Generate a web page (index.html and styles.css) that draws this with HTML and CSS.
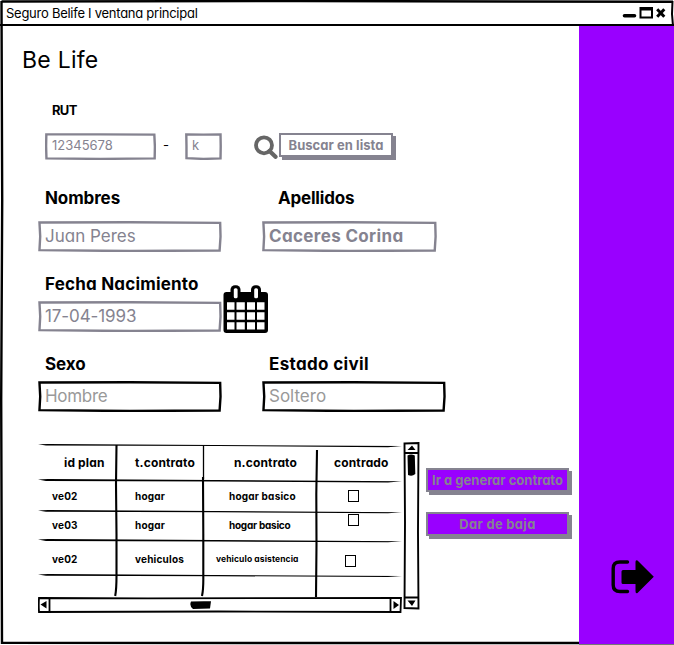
FILE: index.html
```
<!DOCTYPE html>
<html lang="es">
<head>
<meta charset="utf-8">
<title>Seguro Belife</title>
<link rel="stylesheet" href="styles.css">
</head>
<body>
<div class="window">
  <header class="titlebar">
    <span class="title">Seguro Belife I ventana principal</span>
    <svg class="controls" width="44" height="14" viewBox="0 0 44 14">
      <path d="M2.500 9.700H12.500" stroke="#000" stroke-width="3.600" stroke-linecap="round"/>
      <path d="M18.500 2H30V11.500H18.500Z" fill="#fff" stroke="#000" stroke-width="2"/>
      <path d="M18 3H31" stroke="#000" stroke-width="3"/>
      <path d="M35.200 3.300L42.300 10.700M42.300 3.300L35.200 10.700" stroke="#000" stroke-width="3"/>
    </svg>
  </header>
  <div class="body">
    <main class="main">
      <h1>Be Life</h1>
      <div class="label label-rut">RUT</div>
      <div class="row rut-row">
        <div class="field gray rut"><svg class="frame" viewBox="0 0 100 100" preserveAspectRatio="none"><path d="M1.200 5L50 5L98.500 6L99 50L98.800 94L50 96L1.300 94L1 50Z"/></svg><span>12345678</span></div>
        <span class="dash">-</span>
        <div class="field gray dv"><svg class="frame" viewBox="0 0 100 100" preserveAspectRatio="none"><path d="M3.500 5L50 6L96 5L96.500 50L96 94L50 96L4 93L4 50Z"/></svg><span>k</span></div>
        <svg class="search" width="24" height="24" viewBox="0 0 24 24" fill="none" stroke="#666" stroke-width="3.800"><circle cx="10" cy="10.300" r="8"/><path d="M15.500 16L21.500 21.800" stroke-width="4.200" stroke-linecap="round"/></svg>
        <button class="btn find">Buscar en lista</button>
      </div>
      <div class="row labels names"><div class="label c1">Nombres</div><div class="label surname">Apellidos</div></div>
      <div class="row fields">
        <div class="field gray"><svg class="frame" viewBox="0 0 100 100" preserveAspectRatio="none"><path d="M.8 5L50 4L99 6L99.200 50L98.700 95L50 97L.8 94L1.200 50Z"/></svg><span>Juan Peres</span></div>
        <div class="field gray strong right"><svg class="frame" viewBox="0 0 100 100" preserveAspectRatio="none"><path d="M.8 5L50 4L99 6L99.200 50L98.700 95L50 97L.8 94L1.200 50Z"/></svg><span>Caceres Corina</span></div>
      </div>
      <div class="row labels"><div class="label birth">Fecha Nacimiento</div></div>
      <div class="row fields">
        <div class="field gray date"><svg class="frame" viewBox="0 0 100 100" preserveAspectRatio="none"><path d="M.8 5L50 4L99 6L99.200 50L98.700 95L50 97L.8 94L1.200 50Z"/></svg><span>17-04-1993</span></div>
        <svg class="calendar" width="46" height="49" viewBox="0 0 46 49">
          <rect x=".5" y="7" width="44.500" height="41" rx="3"/>
          <rect x="7.500" y=".2" width="10" height="15" rx="4.500"/>
          <rect x="28" y=".2" width="10" height="15" rx="4.500"/>
          <rect x="10.800" y="3.200" width="3.800" height="10" rx="1.500" fill="#fff"/>
          <rect x="31.200" y="3.200" width="3.800" height="10" rx="1.500" fill="#fff"/>
          <path d="M4 17.300h7.500v7.500h-7.500zM13.500 17.300h8.300v7.500h-8.300zM24 17.300h8v7.500h-8zM34 17.300h7.500v7.500h-7.500zM4 27.200h7.500v7.500h-7.500zM13.500 27.200h8.300v7.500h-8.300zM24 27.200h8v7.500h-8zM34 27.200h7.500v7.500h-7.500zM4 37.200h7.500v7.300h-7.500zM13.500 37.200h8.300v7.300h-8.300zM24 37.200h8v7.300h-8zM34 37.200h7.500v7.300h-7.500z" fill="#fff"/>
        </svg>
      </div>
      <div class="row labels"><div class="label c1 sex">Sexo</div><div class="label civil">Estado civil</div></div>
      <div class="row fields">
        <div class="field hombre"><svg class="frame" viewBox="0 0 100 100" preserveAspectRatio="none"><path d="M.8 5L50 4L99 6L99.200 50L98.700 95L50 97L.8 94L1.200 50Z"/></svg><span>Hombre</span></div>
        <div class="field right soltero"><svg class="frame" viewBox="0 0 100 100" preserveAspectRatio="none"><path d="M.8 5L50 4L99 6L99.200 50L98.700 95L50 97L.8 94L1.200 50Z"/></svg><span>Soltero</span></div>
      </div>
      <div class="row bottom">
        <div class="table-area">
          <div class="table">
            <svg class="rules" width="364" height="154" viewBox="0 0 364 154">
              <path d="M0 .2L10 0L364 2L350 3.200L180 2L8 1.600ZM0 35.500L10 35L364 37.200L350 38.500L180 37.600L8 37ZM0 66.500L10 66L364 68.300L350 69.300L180 68.300L8 67.800ZM0 95.500L10 95L364 97.300L350 98.300L180 97.500L8 97ZM0 130.500L10 130L364 132L350 133L180 132.200L8 131.700Z"/>
              <g fill="none" stroke="#000" stroke-width="2.100"><path d="M78.500 1L78 40L78.500 90V132Q78.500 145 77.200 152M165 33L165.300 90V132Q165.500 145 164 152M279 6L278.300 50L278.500 100L278 153"/><path d="M165.500 1V35" stroke-width="1.300"/></g>
            </svg>
            <div class="tr head"><span class="a">id plan</span><span class="b">t.contrato</span><span class="n">n.contrato</span><span class="d">contrado</span></div>
            <div class="tr r1"><span class="a">ve02</span><span class="b">hogar</span><span class="n">hogar basico</span><span class="d"><i class="check"></i></span></div>
            <div class="tr r2"><span class="a">ve03</span><span class="b">hogar</span><span class="n">hogar basico</span><span class="d"><i class="check"></i></span></div>
            <div class="tr r3"><span class="a">ve02</span><span class="b">vehiculos</span><span class="n">vehiculo asistencia</span><span class="d"><i class="check"></i></span></div>
          </div>
          <svg class="hscroll" width="364" height="16" viewBox="0 0 364 16">
            <path d="M1 1L110 1.300L363 1L362.500 15L180 14.500L1 15Q.5 8 1 1ZM11.500 1V15M352.500 1V15" fill="none" stroke="#000" stroke-width="1.800"/>
            <path d="M2.500 7.500L8.500 4V11.500ZM355.500 4L361 8L355.500 12ZM153 4.500Q160 4 173 4.200L172 11.500L155 12Q151 9 153 4.500Z"/>
          </svg>
        </div>
        <svg class="vscroll" width="17" height="168" viewBox="0 0 17 168">
          <path d="M1.500 1.500L15.500 1L15 90L15.500 166.500L1.500 166L2 80ZM1.500 11H15.500M1.500 155.500H15.500" fill="none" stroke="#000" stroke-width="1.900"/>
          <path d="M4.500 8L9 3.500L12.500 8ZM4.500 158.500H12.500L9 164ZM4.500 13.500Q8 11.500 11.800 13.500L12.300 32Q9 35 5 33Z"/>
        </svg>
        <div class="actions">
          <button class="btn purple go">Ir a generar contrato</button>
          <button class="btn purple drop">Dar de baja</button>
        </div>
      </div>
    </main>
    <aside class="side">
      <svg class="exit" width="44" height="36" viewBox="0 0 44 36">
        <path d="M16.500 3H9Q2.200 3 2.200 9.500V26Q2.200 32.500 9 32.500H16.500" fill="none" stroke="#000" stroke-width="3.400" stroke-linecap="round"/>
        <path d="M12 11H24.500V3Q24.500 .5 26.500 1.500L42.800 17.700L26.500 34Q24.500 35 24.500 32V25H12Q10.500 25 10.500 23.500V12.500Q10.500 11 12 11Z"/>
      </svg>
    </aside>
  </div>
  <svg class="outline" viewBox="0 0 674 645" width="674" height="645"><path d="M1.500 1.500L300 1L673 1.800M1.500 1L2.200 200L1.200 400L2 644M2 642.800L300 643L579 643" fill="none" stroke="#000" stroke-width="2.400"/><path d="M672.500 1L672 14L673 26" fill="none" stroke="#000" stroke-width="2"/><path d="M579 644.500H674" stroke="#777" stroke-width="1"/></svg>
</div>
</body>
</html>
```
FILE: styles.css
```
* { box-sizing: border-box; }
body { margin: 0; background: #fff; color: #000; font-family: Inter, "Open Sans", sans-serif; font-feature-settings: "cv11"; }
.window { position: relative; width: 674px; height: 645px; overflow: hidden; display: flex; flex-direction: column; }
.outline { position: absolute; inset: 0; pointer-events: none; }
.titlebar { flex: none; height: 26px; display: flex; align-items: center; justify-content: space-between; padding: 1px 8px 0 6px; border-bottom: 2px solid #000; }
.title { font-size: 13px; letter-spacing: -.26px; }
.body { flex: 1; display: flex; }
.main { width: 579px; }
.side { flex: 1; background: #9900ff; padding: 533px 0 0 32px; }
.exit, .search, .calendar, .hscroll, .vscroll { display: block; flex: none; }
h1 { margin: 19px 0 0 22px; font-size: 23px; line-height: 30px; font-weight: 400; letter-spacing: .25px; }
.row { display: flex; }
.label { font-weight: 700; font-size: 17px; line-height: 20px; letter-spacing: -.1px; }
.label-rut { margin: 27px 0 0 52px; font-size: 13px; line-height: 16px; letter-spacing: -.7px; }
.rut-row { margin: 15px 0 0 45px; height: 27px; }
.field { position: relative; width: 184px; height: 31px; padding-left: 7px; display: flex; align-items: center; font-size: 17px; line-height: 20px; color: #999; }
.field span { position: relative; }
.fields .field { padding-bottom: 1px; }
.frame { position: absolute; inset: 0; width: 100%; height: 100%; }
.frame path { fill: none; stroke: #000; stroke-width: 2.4px; vector-effect: non-scaling-stroke; }
.gray { color: #858390; }
.gray .frame path { stroke: #858390; }
.rut-row .field { height: 27px; font-size: 13px; padding-bottom: 3px; }
.field.rut { width: 111px; }
.dash { width: 29px; padding-left: 7px; font-size: 13px; line-height: 25px; }
.field.dv { width: 37px; }
.search { margin: 2px 1px 0 32px; }
.btn { border: 2px solid #858390; box-shadow: 3px 3px 0 #858390; background: #fff; color: #858390; font: 700 13px/18px Inter, "Open Sans", sans-serif; font-feature-settings: "cv11"; padding: 0; white-space: nowrap; }
.find { width: 114px; height: 24px; letter-spacing: .05px; }
.labels { padding-left: 45px; margin-top: 22px; }
.names { margin-top: 28px; }
.c1 { width: 224px; }
.surname { padding-left: 9px; letter-spacing: -.2px; }
.fields { padding-left: 38px; margin-top: 7px; height: 31px; }
.names + .fields { margin-top: 13px; }
.fields .right { margin-left: 40px; }
.fields .strong { width: 175px; font-weight: 700; letter-spacing: .35px; }
.calendar { margin: -16px 0 0 1px; }
.birth { letter-spacing: .2px; }
.civil { letter-spacing: .35px; }
.hombre { letter-spacing: -.3px; }
.date { letter-spacing: -.1px; }
.bottom { padding-left: 38px; margin-top: 30px; }
.table-area { width: 364px; padding-top: 2px; margin-right: 1px; }
.table { position: relative; height: 153px; padding-top: 1px; }
.rules { position: absolute; left: 0; top: 0; }
.tr { position: relative; display: grid; grid-template-columns: 78px 87px 113px 86px; align-items: center; height: 31px; font-size: 10px; font-weight: 700; letter-spacing: .2px; white-space: nowrap; }
.head { height: 35px; font-size: 12px; letter-spacing: .15px; }
.a { padding-left: 14px; }
.b { padding-left: 19px; }
.n { padding-left: 26px; }
.d { padding-left: 32px; }
.head .a { padding-left: 26px; }
.head .n { padding-left: 31px; }
.head .d { padding-left: 18px; }
.r2 { height: 27px; }
.r2 .n { letter-spacing: -.25px; }
.r3 { height: 42px; }
.r3 .n { font-size: 8.5px; padding-left: 13px; letter-spacing: .1px; }
.r3 .d { padding-left: 29px; }
.check { display: block; width: 11px; height: 12px; border: 1px solid #000; background: #fff; }
.r2 .check { margin-top: -9px; }
.r3 .check { margin-top: 3px; }
.actions { margin: 26px 0 0 6px; display: flex; flex-direction: column; gap: 20px; }
.purple { width: 143px; height: 24px; background: #9900ff; letter-spacing: 0; }
.drop { letter-spacing: .3px; }
```
